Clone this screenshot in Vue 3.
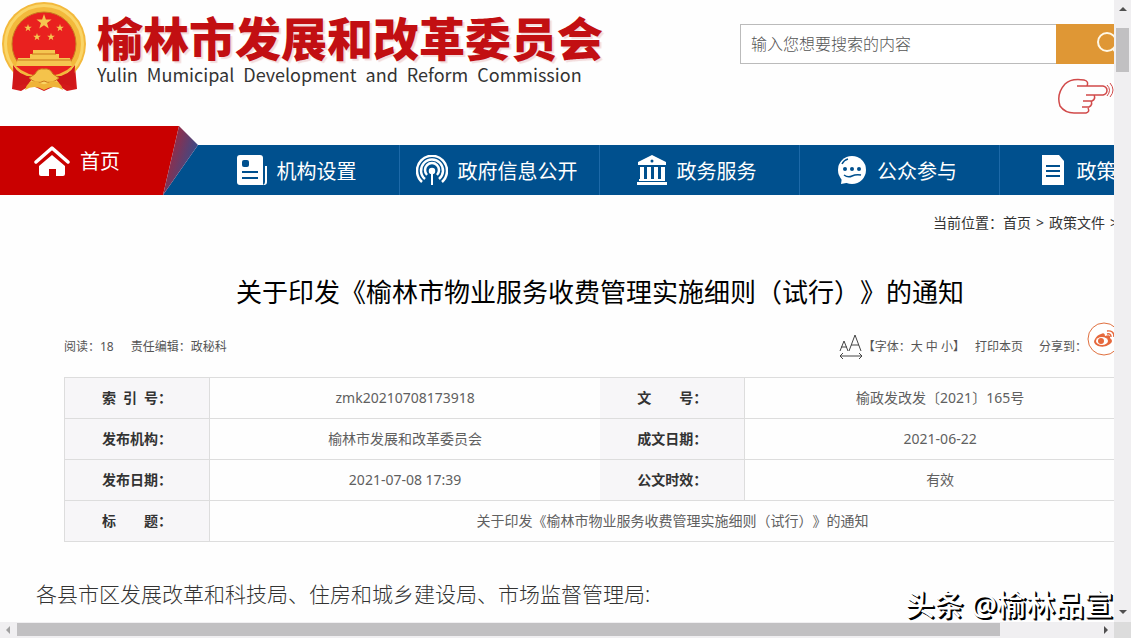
<script setup>
import { ref } from 'vue';

const keyword = ref('');

const navItems = [
    { name: '机构设置', icon: 'doc' },
    { name: '政府信息公开', icon: 'signal' },
    { name: '政务服务', icon: 'bank' },
    { name: '公众参与', icon: 'chat' },
    { name: '政策文件', icon: 'file' },
];

const rows = [
    ['索\u2002引\u2002号：', 'zmk20210708173918', '文\u3000\u3000号：', '榆政发改发〔2021〕165号'],
    ['发布机构：', '榆林市发展和改革委员会', '成文日期：', '2021-06-22'],
    ['发布日期：', '2021-07-08 17:39', '公文时效：', '有效'],
];

const title = '关于印发《榆林市物业服务收费管理实施细则（试行）》的通知';

const star = '0,-10 2.4,-3.2 9.5,-3.1 3.8,1.2 5.9,8.1 0,4 -5.9,8.1 -3.8,1.2 -9.5,-3.1 -2.4,-3.2';
</script>

<template>
    <div class="window">
        <div class="viewport">
            <div class="page">
                <header class="header">
                    <a class="brand" href="#">
                        <svg class="emblem" viewBox="0 0 88 94">
                            <path d="M14 66 L12 89 L21 91 L31 85 L44 91 L57 85 L67 91 L77 89 L75 66Z" fill="#d3191b" />
                            <circle cx="44" cy="44" r="42" fill="#f3b93c" />
                            <circle cx="44" cy="44" r="38.500" fill="none" stroke="#fad567" stroke-width="3" />
                            <circle cx="44" cy="44" r="32" fill="#e9211f" stroke="#c97a20" />
                            <g fill="#f5c650">
                                <polygon :points="star" transform="translate(44 22) scale(.8)" />
                                <polygon :points="star" transform="translate(28 28) scale(.4)" />
                                <polygon :points="star" transform="translate(60 28) scale(.4)" />
                                <polygon :points="star" transform="translate(37 37) scale(.4)" />
                                <polygon :points="star" transform="translate(51 37) scale(.4)" />
                                <path d="M33 50h22v4h4v4H30v-4h3z" />
                                <path d="M18 58h52l2 8H16z" />
                            </g>
                            <path d="M32 54h24M18 60h52" stroke="#c9781b" fill="none" />
                            <path d="M16 66h56q-10 10-28 10T16 66Z" fill="#e9211f" />
                            <path d="M13 65q8 13 22 11l-7 8q-10 0-14 5zM75 65q-8 13-22 11l7 8q10 0 14 5z" fill="#cf1719" />
                            <path d="M35 74q3-6 9-5 6-1 9 5l6 4q-8 7-15 3-7 4-15-3z" fill="#f5c34b" stroke="#c9781b" />
                            <path d="M25 90q2-9 11-9l8 4 8-4q9 0 11 9-9-6-19 0-10-6-19 0Z" fill="#efb338" />
                        </svg>
                        <span class="names">
                            <span class="name-cn">榆林市发展和改革委员会</span>
                            <span class="name-en">Yulin&ensp;Mumicipal&ensp;Development&ensp;and&ensp;Reform&ensp;Commission</span>
                        </span>
                    </a>
                    <div class="tools">
                        <form class="search" @submit.prevent>
                            <input v-model="keyword" class="search-input" type="text" placeholder="输入您想要搜索的内容" aria-label="搜索" />
                            <button class="search-button" aria-label="搜索">
                                <svg width="26" height="26" viewBox="0 0 26 26" fill="none" stroke="#fff8e6" stroke-width="2">
                                    <circle cx="12" cy="11" r="9" />
                                    <path d="M18 18l6 7" />
                                </svg>
                            </button>
                        </form>
                        <svg class="hand" width="58" height="38" viewBox="0 0 58 38" fill="none" stroke="#d14a4a" stroke-width="1.500">
                            <path d="M20 8h26q4 1 4 4.500t-4 4.500H29M30 8q2-5-3-6-13-2-19 4-9 10-5 22 5 7 14 7l12 0q4-1 2-5M25 29h7q4-2 2-6M26 23h9q4-2 2-6" />
                            <path d="M50 7q5 5 0 11M53 5q6 7 0 14" stroke-width="1" />
                        </svg>
                    </div>
                </header>

                <nav class="nav">
                    <a class="home" href="#">
                        <svg class="home-bg" viewBox="0 0 200 69">
                            <defs>
                                <linearGradient id="fold" x1="0" y1="0" x2="1" y2="0.600">
                                    <stop offset="0.150" stop-color="#b02334" />
                                    <stop offset="0.850" stop-color="#3d4a86" />
                                </linearGradient>
                            </defs>
                            <path d="M163 69L198 19h2v50z" fill="#00508e" />
                            <path d="M0 0h179l-16 69H0z" fill="#c90000" />
                            <path d="M179 0l19 19-35 50z" fill="url(#fold)" />
                        </svg>
                        <svg class="icon" width="36" height="32" viewBox="0 0 36 32">
                            <path d="M2 17L18 3l16 14" fill="none" stroke="#fff" stroke-width="3.500" stroke-linecap="round" stroke-linejoin="round" />
                            <path d="M5 21L18 10l13 11v8q0 2-2 2h-7v-7h-7v7H7q-2 0-2-2z" fill="#fff" />
                        </svg>
                        <span>首页</span>
                    </a>
                    <a v-for="item in navItems" :key="item.name" class="nav-item" href="#">
                        <svg v-if="item.icon == 'doc'" width="30" height="30" viewBox="0 0 30 30">
                            <path d="M3 0h20q3 0 3 3v27H3q-3 0-3-3V3q0-3 3-3z" fill="#fff" />
                            <path d="M28 11h2v16q0 3-3 3h-1q2-1 2-3z" fill="#fff" />
                            <rect x="5" y="5" width="7" height="7" rx="2" fill="#00508e" />
                            <path d="M5 17h16M5 23h16" stroke="#00508e" stroke-width="2" />
                        </svg>
                        <svg v-else-if="item.icon == 'signal'" width="32" height="30" viewBox="0 0 32 30" fill="none" stroke="#fff" stroke-width="2.500">
                            <path d="M6 27A15 15 0 1 1 26 27" />
                            <path d="M9 24A11 11 0 1 1 23 24" />
                            <path d="M11 20A7 7 0 1 1 21 20" />
                            <circle cx="16" cy="16" r="2" fill="#fff" />
                            <path d="M16 17v13" stroke-width="2" />
                        </svg>
                        <svg v-else-if="item.icon == 'bank'" width="30" height="30" viewBox="0 0 30 30">
                            <path d="M15 0l14 7v3H1V7zM3 12h4v12H3zM10 12h4v12h-4zM17 12h4v12h-4zM24 12h4v12h-4zM2 24h26v2H2zM0 27h30v3H0z" fill="#fff" />
                            <circle cx="15" cy="6" r="1.500" fill="#00508e" />
                        </svg>
                        <svg v-else-if="item.icon == 'chat'" width="31" height="30" viewBox="0 0 31 30">
                            <path d="M6 22l-1 7q5 0 9-3z" fill="#fff" />
                            <circle cx="16" cy="15" r="14" fill="#fff" />
                            <g fill="#00508e">
                                <circle cx="9" cy="14" r="2" />
                                <circle cx="16" cy="14" r="2" />
                                <circle cx="23" cy="14" r="2" />
                            </g>
                            <path d="M8 20q4 3 8 1t9-1M6 9q2-4 6-5" fill="none" stroke="#00508e" stroke-width="1.500" />
                        </svg>
                        <svg v-else width="30" height="30" viewBox="0 0 30 30">
                            <path d="M5 0h17l5 6v24H5z" fill="#fff" />
                            <path d="M9 11h14M9 16h14M9 21h14" stroke="#00508e" stroke-width="2" />
                        </svg>
                        <span>{{ item.name }}</span>
                    </a>
                </nav>

                <main class="content">
                    <div class="crumbs">
                        <span>当前位置：<a href="#">首页</a></span>
                        <span>&gt;</span>
                        <a href="#">政策文件</a>
                        <span>&gt;</span>
                    </div>
                    <h1 class="title">{{ title }}</h1>
                    <div class="meta">
                        <span>阅读：18</span>
                        <span>责任编辑：政秘科</span>
                        <div class="meta-tools">
                            <span class="font-size">
                                <svg width="24" height="26" viewBox="1 0 24 26" fill="none" stroke="#444">
                                    <path d="M2 18L6 8l4 10M3 14h6M11 18L17 2l6 16M13 12h8M2 23h22M5 20l-3 3 3 3M21 20l3 3-3 3" />
                                </svg>
                                <span>【字体：<a href="#">大</a> <a href="#">中</a> <a href="#">小</a>】</span>
                            </span>
                            <a href="#">打印本页</a>
                            <span class="share">分享到：
                                <a href="#" aria-label="微博">
                                    <svg width="34" height="34" viewBox="0 0 34 34">
                                        <circle cx="17" cy="17" r="16" fill="#fff" stroke="#e0703f" />
                                        <path d="M14 12q4-2 4 2 6-2 5 2 4 3 0 6-5 4-12 2-6-3-3-7 2-4 6-5z" fill="#e6683c" />
                                        <ellipse cx="15" cy="19" rx="6" ry="4" fill="#fff" />
                                        <circle cx="14" cy="19" r="3" fill="#e6683c" />
                                        <path d="M20 12q4-1 4 3M20 9q7-1 7 6" fill="none" stroke="#e6683c" stroke-width="1.500" />
                                    </svg>
                                </a>
                            </span>
                        </div>
                    </div>

                    <table class="info">
                        <tbody>
                            <tr v-for="row in rows" :key="row[0]">
                                <th>{{ row[0] }}</th>
                                <td>{{ row[1] }}</td>
                                <th>{{ row[2] }}</th>
                                <td>{{ row[3] }}</td>
                            </tr>
                            <tr>
                                <th>标&#12288;&#12288;题：</th>
                                <td colspan="3">{{ title }}</td>
                            </tr>
                        </tbody>
                    </table>
                </main>
                <p class="article">各县市区发展改革和科技局、住房和城乡建设局、市场监督管理局:</p>
            </div>
            <div class="watermark">头条 @榆林品宣</div>
        </div>

        <div class="vbar">
            <svg width="17" height="17" viewBox="0 0 17 17"><path d="M5 11l4-4 4 4z" fill="#505050" /></svg>
            <div class="vtrack"><div class="vthumb"></div></div>
            <svg width="17" height="17" viewBox="0 0 17 17"><path d="M5 5l4 4 4-4z" fill="#505050" /></svg>
        </div>
        <div class="hbar">
            <svg width="17" height="16" viewBox="0 0 17 16"><path d="M10 4L6 8l4 4z" fill="#a0a0a0" /></svg>
            <div class="htrack"><div class="hthumb"></div></div>
            <svg width="17" height="16" viewBox="0 0 17 16"><path d="M7 4l4 4-4 4z" fill="#505050" /></svg>
        </div>
        <div class="corner"></div>
    </div>
</template>

<style>
    body {
        margin: 0;
    }
</style>

<style scoped>
    .window {
        display: grid;
        grid-template-columns: minmax(0, 1fr) 17px;
        grid-template-rows: minmax(0, 1fr) 16px;
        height: 100vh;
        font-family: "Noto Sans", "Noto Sans CJK SC", sans-serif;
        text-spacing-trim: space-all;
        color: #333;
        background-color: #fefefe;
    }

    .viewport {
        position: relative;
        overflow: hidden;
    }

    .page {
        min-width: 1200px;
    }

    svg {
        display: block;
        flex-shrink: 0;
    }

    a {
        color: inherit;
        text-decoration: none;
    }

    .header {
        display: flex;
        justify-content: space-between;
        height: 126px;
    }

    .brand {
        display: flex;
        gap: 9px;
    }

    .emblem {
        width: 88px;
        height: 94px;
    }

    .names {
        display: flex;
        flex-direction: column;
        padding-top: 11px;
        font-family: "Noto Sans CJK SC", sans-serif;
        white-space: nowrap;
    }

    .name-cn {
        font-size: 46px;
        line-height: 50px;
        font-weight: 900;
        color: #c20f12;
        text-shadow: 2px 2px 1px #f3dcdc;
    }

    .name-en {
        font-size: 18px;
        line-height: 26px;
    }

    .tools {
        display: flex;
        flex-direction: column;
        align-items: flex-end;
        gap: 14px;
        padding: 24px 40px 0 0;
    }

    .search {
        display: flex;
    }

    .search-input {
        box-sizing: border-box;
        width: 316px;
        height: 40px;
        padding: 0 10px;
        border: 1px solid #bbb;
        border-right: 0;
        font-family: inherit;
        font-size: 16px;
        font-weight: 300;
        background-color: #fff;
        outline: none;
    }

    .search-input::placeholder {
        color: #555;
    }

    .search-button {
        display: flex;
        align-items: center;
        justify-content: center;
        width: 104px;
        height: 40px;
        padding: 0;
        border: 0;
        background-color: #df9735;
    }

    .hand {
        margin-right: 45px;
    }

    .nav {
        display: flex;
        align-items: flex-end;
        font-size: 20px;
        color: #fff;
    }

    .home {
        position: relative;
        box-sizing: border-box;
        display: flex;
        align-items: center;
        gap: 10px;
        width: 200px;
        height: 69px;
        padding-left: 34px;
    }

    .home-bg {
        position: absolute;
        inset: 0;
    }

    .home .icon,
    .home span {
        position: relative;
    }

    .nav-item {
        box-sizing: border-box;
        display: flex;
        flex: 1;
        align-items: center;
        justify-content: center;
        gap: 10px;
        height: 50px;
        padding-right: 6px;
        border-right: 1px solid #1d69a8;
        background-color: #00508e;
    }

    .content {
        padding: 0 64px;
    }

    .crumbs {
        display: flex;
        justify-content: flex-end;
        gap: 5px;
        padding: 18px 18px 0 0;
        font-size: 14px;
        line-height: 20px;
    }

    .title {
        margin: 39px 0 0;
        font-size: 26px;
        line-height: 40px;
        font-weight: 400;
        text-align: center;
        color: #000;
    }

    .meta {
        box-sizing: border-box;
        display: flex;
        align-items: center;
        gap: 17px;
        height: 65px;
        padding-top: 2px;
        font-size: 12px;
        color: #555;
    }

    .meta-tools {
        display: flex;
        align-items: center;
        gap: 10px;
        margin-left: auto;
        padding-right: 15px;
    }

    .font-size,
    .share {
        display: flex;
        align-items: center;
    }

    .share {
        margin-left: 6px;
    }

    .share a {
        margin-bottom: 14px;
    }

    .info {
        width: 100%;
        border-collapse: collapse;
        table-layout: fixed;
        font-size: 14px;
        line-height: 20px;
        text-align: center;
        color: #606060;
    }

    .info tr {
        border: 1px solid #ddd;
    }

    .info th {
        width: 144px;
        padding: 10px 0;
        border-right: 1px solid #ddd;
        background-color: #f7f6f8;
        color: #333;
    }

    .info td {
        padding: 10px 0;
    }

    .article {
        margin: 36px;
        font-size: 21px;
        line-height: 32px;
        font-weight: 300;
    }

    .watermark {
        position: absolute;
        right: 1px;
        bottom: 0;
        font-size: 29px;
        line-height: 34px;
        font-weight: 500;
        color: #fff;
        text-shadow: 1px 1px 0 #000, 2px 2px 0 #000;
    }

    .vbar {
        display: flex;
        flex-direction: column;
        background-color: #f0eff1;
    }

    .vtrack {
        flex: 1;
        padding: 11px 2px 0;
    }

    .vthumb {
        height: 44px;
        background-color: #c1c0c2;
    }

    .hbar {
        display: flex;
        background-color: #f0eff1;
    }

    .htrack {
        flex: 1;
        padding: 1px 0 2px;
    }

    .hthumb {
        width: 91%;
        height: 100%;
        background-color: #c1c0c2;
    }

    .corner {
        background-color: #dcdcdc;
    }
</style>
